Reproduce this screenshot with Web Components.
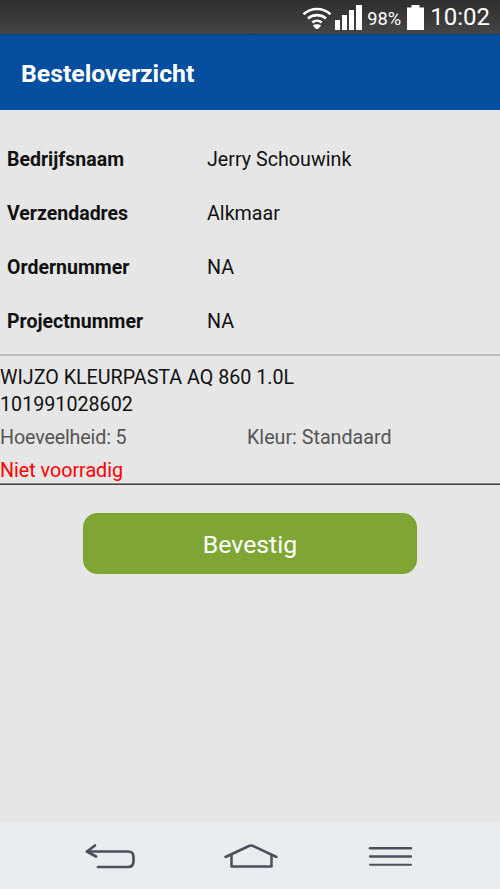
<!DOCTYPE html>
<html lang="nl">
<head>
<meta charset="utf-8">
<title>Besteloverzicht</title>
<style>
  html, body { margin: 0; height: 100%; }
  body { width: 500px; height: 889px; overflow: hidden; font-family: Roboto, "Liberation Sans", sans-serif; background: #e6e6e6; display: flex; flex-direction: column; }
  order-content { flex: 1; }
</style>
</head>
<body>
<status-bar></status-bar>
<app-header>Besteloverzicht</app-header>
<order-content>
  <info-table>
    <info-row label="Bedrijfsnaam">Jerry Schouwink</info-row>
    <info-row label="Verzendadres">Alkmaar</info-row>
    <info-row label="Ordernummer">NA</info-row>
    <info-row label="Projectnummer">NA</info-row>
  </info-table>
  <order-line name="WIJZO KLEURPASTA AQ 860 1.0L" code="101991028602" amount="Hoeveelheid: 5" color="Kleur: Standaard" stock="Niet voorradig"></order-line>
  <confirm-button>Bevestig</confirm-button>
</order-content>
<nav-bar></nav-bar>
<script>
class StatusBar extends HTMLElement {
  constructor() {
    super();
    this.attachShadow({ mode: 'open' });
    this.shadowRoot.innerHTML = `
      <style>
        :host { display: flex; align-items: center; justify-content: flex-end; height: 34px; box-sizing: border-box; padding: 0 10px 0 0; background: linear-gradient(#2e2e2e, #454545); color: #fff; }
        svg { display: block; flex: none; }
        .pct { font-size: 18.300px; margin: 2px 0 0 5px; }
        .time { font-size: 24px; margin: 0 0 0 6px; }
      </style>
      <svg width="30" height="24" viewBox="0 0 30 24" style="margin-top:-1px">
        <g fill="none" stroke="#fff" stroke-width="2.600">
          <path d="M1.500 9.200C9 2.200 21 2.200 28.500 9.200"/>
          <path d="M6 13.500C11 9 19 9 24 13.500"/>
          <path d="M10.300 17.400C13 15.200 17 15.200 19.700 17.400"/>
        </g>
        <path d="M15 25L10.800 20.400C13 18.700 17 18.700 19.200 20.400Z" fill="#fff"/>
      </svg>
      <svg width="27" height="25" viewBox="0 0 27 25" style="margin-left:3px">
        <rect x="0" y="15" width="5" height="10" fill="#fff"/>
        <rect x="7" y="10" width="5" height="15" fill="#fff"/>
        <rect x="14" y="5" width="5" height="20" fill="#fff"/>
        <rect x="21" y="0" width="6" height="25" fill="#fff"/>
      </svg>
      <span class="pct">98%</span>
      <svg width="17" height="25" viewBox="0 0 17 25" style="margin-left:6px">
        <path d="M4.500 0h8v2.500h4.500v22.500h-17v-22.500h4.500z" fill="#fff"/>
      </svg>
      <span class="time">10:02</span>`;
  }
}

class AppHeader extends HTMLElement {
  constructor() {
    super();
    this.attachShadow({ mode: 'open' });
    this.shadowRoot.innerHTML = `
      <style>
        :host { display: flex; align-items: center; height: 76px; box-sizing: border-box; padding: 2px 0 0 21px; background: #064fa0; border-top: 1px solid #0b3d7c; color: #fff; font-size: 24.800px; font-weight: 700; }
      </style>
      <slot></slot>`;
  }
}

class InfoTable extends HTMLElement {
  constructor() {
    super();
    this.attachShadow({ mode: 'open' });
    this.shadowRoot.innerHTML = `
      <style>
        :host { display: block; padding: 22px 0 6px; }
      </style>
      <slot></slot>`;
  }
}

class InfoRow extends HTMLElement {
  constructor() {
    super();
    this.attachShadow({ mode: 'open' });
    this.shadowRoot.innerHTML = `
      <style>
        :host { display: grid; grid-template-columns: 200px 1fr; align-items: center; height: 54px; padding-left: 7px; font-size: 19.700px; color: #111; }
        .label { font-weight: 700; font-size: 19.500px; }
      </style>
      <span class="label"></span>
      <span><slot></slot></span>`;
    this.shadowRoot.querySelector('.label').textContent = this.getAttribute('label');
  }
}

class OrderLine extends HTMLElement {
  constructor() {
    super();
    this.attachShadow({ mode: 'open' });
    this.shadowRoot.innerHTML = `
      <style>
        :host { display: block; border-top: 2px solid #bcbcbc; border-bottom: 2px solid #8a8a8a; font-size: 19.700px; position: relative; }
        :host::after { content: ""; position: absolute; left: 0; right: 0; bottom: -2px; height: 1px; background: #444; }
        .title { line-height: 26px; padding-top: 9px; color: #111; }
        .code { margin-top: 1px; }
        .meta { display: grid; grid-template-columns: 247px 1fr; line-height: 26px; margin-top: 7px; color: #555; }
        .amount { letter-spacing: -0.150px; }
        .stock { line-height: 25px; margin-top: 7px; color: #f00; }
      </style>
      <div class="title"><div class="name"></div><div class="code"></div></div>
      <div class="meta"><span class="amount"></span><span class="color"></span></div>
      <div class="stock"></div>`;
    for (const key of ['name', 'code', 'amount', 'color', 'stock']) {
      this.shadowRoot.querySelector('.' + key).textContent = this.getAttribute(key);
    }
  }
}

class ConfirmButton extends HTMLElement {
  constructor() {
    super();
    this.attachShadow({ mode: 'open' });
    this.shadowRoot.innerHTML = `
      <style>
        :host { display: block; padding: 28px 83px 0 83px; }
        button { display: block; width: 100%; height: 61px; padding: 2px 0 0; border: 1px solid #7ea32c; border-radius: 14px; background: #7fa635; color: #fff; font: 400 24.800px Roboto, sans-serif; }
      </style>
      <button><slot></slot></button>`;
  }
}

class NavBar extends HTMLElement {
  constructor() {
    super();
    this.attachShadow({ mode: 'open' });
    this.shadowRoot.innerHTML = `
      <style>
        :host { display: flex; height: 67px; align-items: center; justify-content: space-between; box-sizing: border-box; padding: 0 88px 0 85px; background: #e9edf0; }
        svg { display: block; fill: none; stroke: #4a505c; stroke-linecap: round; stroke-linejoin: round; }
      </style>
      <svg width="50" height="26" viewBox="0 0 50 26" stroke-width="2.700">
        <path d="M10 2.500L2 8.500L11 13.500"/>
        <path d="M2 8.500H43C47 8.500 48.500 11 48.500 14V18C48.500 22 46.500 24 43 24H13"/>
      </svg>
      <svg width="54" height="26" viewBox="0 0 54 26" stroke-width="2.500" style="margin-left:-2px">
        <path d="M1.500 14L25 3C26.500 2.400 27.500 2.400 29 3L52.500 14"/>
        <path d="M7.500 11.500V23.500H47.500V11.500" stroke-linecap="butt"/>
      </svg>
      <svg width="44" height="22" viewBox="0 0 44 22">
        <path d="M2 3.200H43" stroke-width="2.600"/>
        <path d="M2 11.500H43" stroke-width="2.300"/>
        <path d="M2 19.800H43" stroke-width="2"/>
      </svg>`;
  }
}

customElements.define('status-bar', StatusBar);
customElements.define('app-header', AppHeader);
customElements.define('info-table', InfoTable);
customElements.define('info-row', InfoRow);
customElements.define('order-line', OrderLine);
customElements.define('confirm-button', ConfirmButton);
customElements.define('nav-bar', NavBar);
</script>
</body>
</html>
